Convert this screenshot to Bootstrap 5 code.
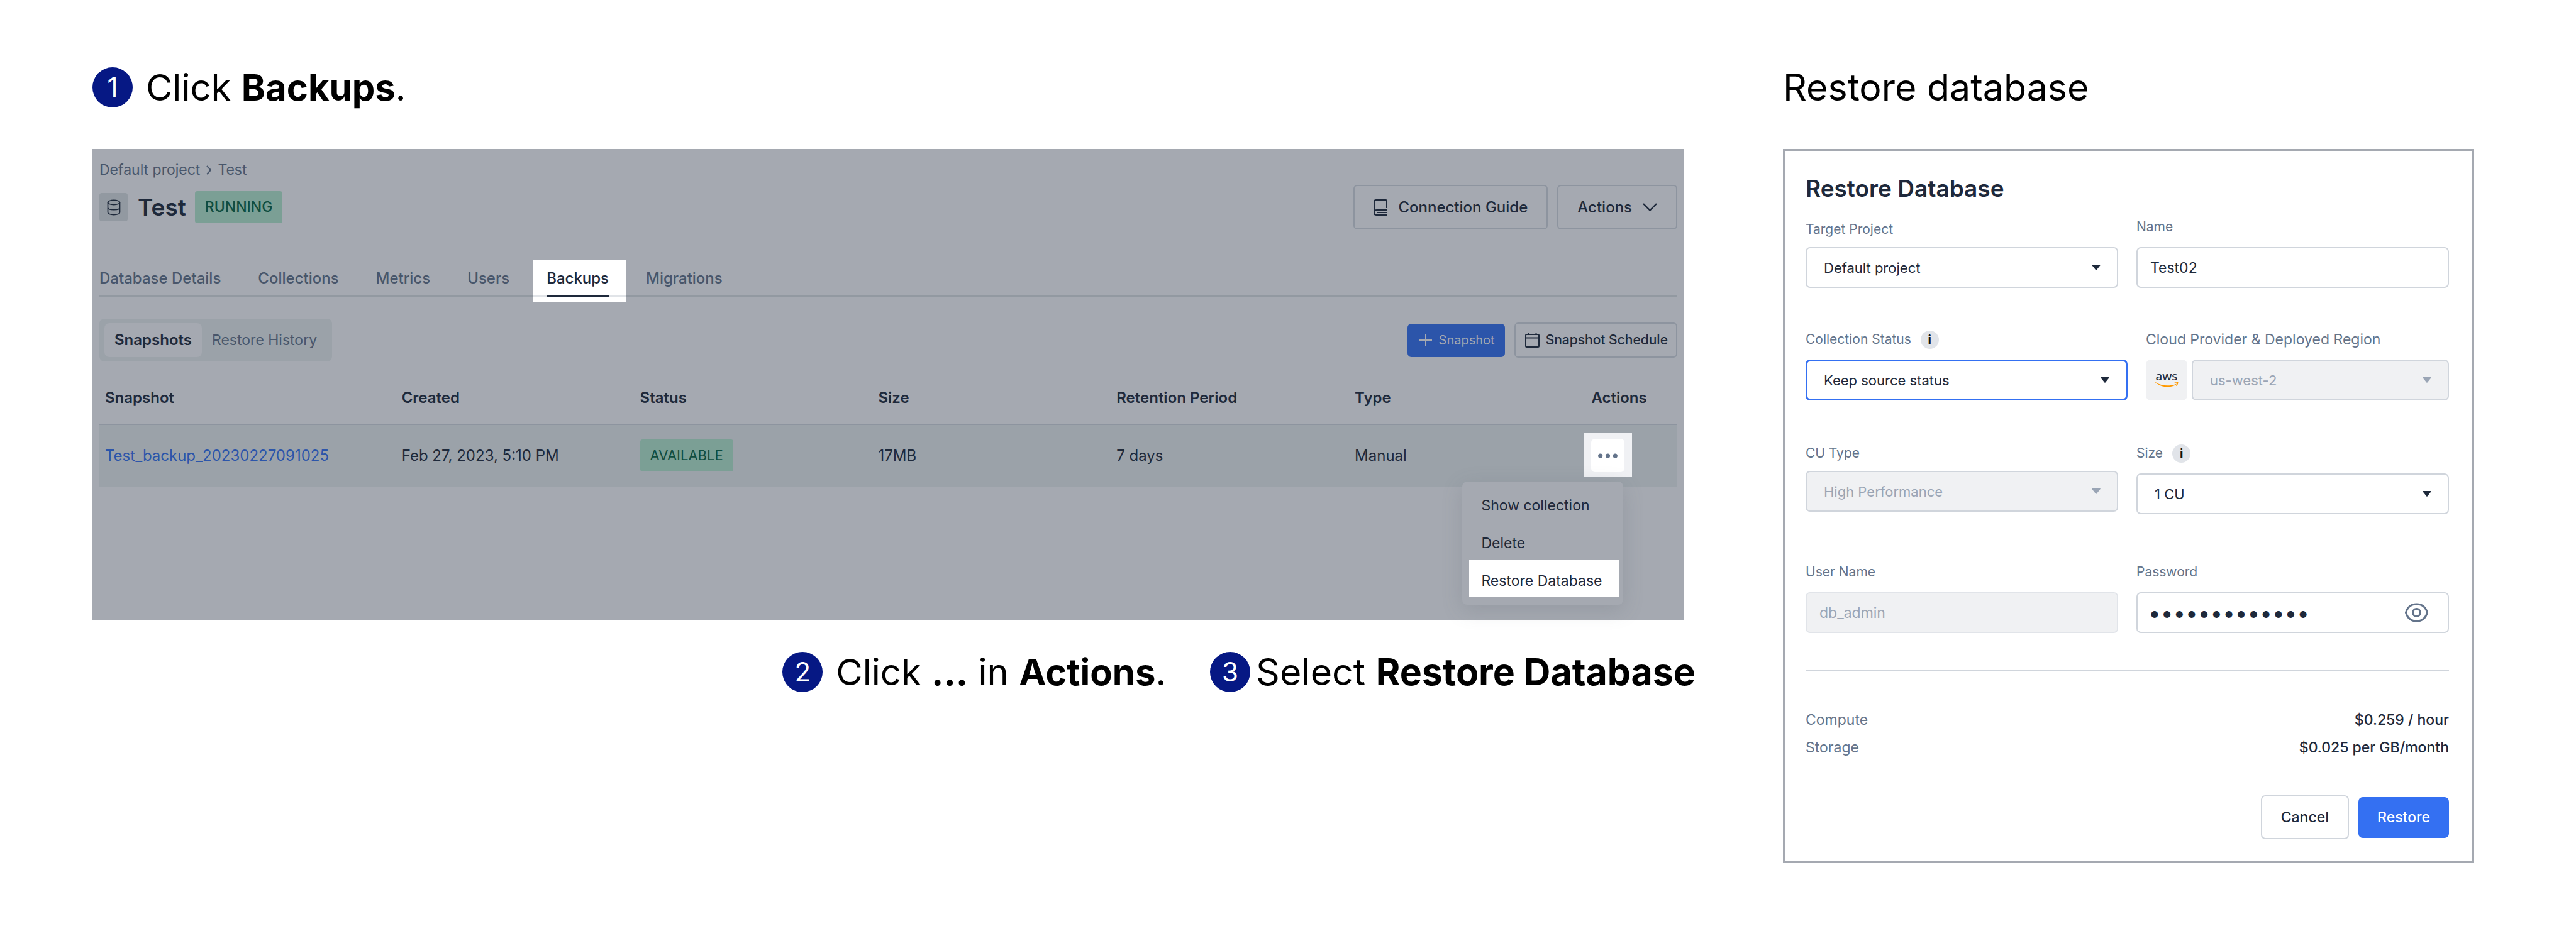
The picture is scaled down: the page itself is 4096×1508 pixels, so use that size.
<!DOCTYPE html>
<html lang="en">
<head>
<meta charset="utf-8">
<meta name="viewport" content="width=device-width, initial-scale=1">
<title>Restore a database from a backup</title>
<link href="https://cdn.jsdelivr.net/npm/bootstrap@5.3.0/dist/css/bootstrap.min.css" rel="stylesheet">
<style>
  :root { --ink: #1e293b; --dim: #a5a9b1; --dim-row: #9ba2a9; --dim-line: #8d949f; --dim-muted: #48566b; --muted: #64748b; --line: #d0d5dc; --blue: #3470f2; }
  body { font-family: Inter, "Liberation Sans", sans-serif; font-size: 24px; line-height: 32px; color: var(--ink); background: #fff; }
  button { font-family: inherit; }
  .guide { padding: 107px 162px 136px 147px; gap: 157px; }
  .guide-left { flex: 2531 1 0; min-width: 0; }
  .guide-right { flex: 1099 1 0; min-width: 0; }

  /* step captions */
  .caption { font-size: 59px; line-height: 64px; font-weight: 400; color: #000; margin: 0; gap: 21px; white-space: nowrap; }
  .caption b { font-weight: 700; }
  .caption-near { gap: 9px; }
  .caption-mid { font-size: 58px; }
  .step-no { width: 64px; height: 64px; border-radius: 50%; background: #061884; color: #fff; font-size: 42px; }
  .caption-top { margin-bottom: 66px; }
  .caption-row { margin: 51px -18px 0 0; gap: 70px; }

  /* dimmed console */
  .console { background: var(--dim); padding: 17px 11px 211px 11px; }
  .crumbs { color: var(--dim-muted); font-size: 23px; gap: 10px; }
  .crumbs a { color: inherit; text-decoration: none; }
  .db-head { margin-top: 8px; min-height: 71px; }
  .tool-gap { gap: 15px; }
  .db-icon { width: 45px; height: 45px; border-radius: 4px; background: #9299a1; }
  .db-name { font-size: 37px; line-height: 48px; font-weight: 600; margin: 0 14px 0 16px; }
  .state { background: #7b9f95; color: #0f4d40; font-size: 22px; line-height: 32px; border-radius: 4px; padding: 9px 16px 10px; font-weight: 400; }
  .state-strong { font-weight: 500; font-size: 23px; }
  .btn-line { border: 2px solid var(--dim-line); border-radius: 6px; color: var(--ink); font-size: 24px; line-height: 32px; font-weight: 500; height: 71px; padding: 0 30px; gap: 17px; }
  .btn-slim { font-size: 21px; height: 56px; padding: 0 13px 0 15px; gap: 10px; }
  .btn-snap { background: #2c55aa; color: var(--dim); border-radius: 6px; font-size: 20px; line-height: 32px; height: 53px; padding: 0 16px 0 19px; gap: 11px; }

  .db-tabs { margin-top: 62px; border-bottom: 4px solid #9299a1; gap: 59px; }
  .db-tabs .nav-link { padding: 0 0 10px; color: var(--dim-muted); font-weight: 500; position: relative; z-index: 0; }
  .db-tabs .active { color: var(--ink); }
  .db-tabs .active::before { content: ""; position: absolute; z-index: -1; inset: -14px -27px -11px -21px; background: linear-gradient(#e1e4e8, #e1e4e8) 0 56px / 100% 4px no-repeat #fff; }
  .db-tabs .active::after { content: ""; position: absolute; left: 0; right: 0; bottom: -4px; height: 4px; background: var(--ink); }

  .db-tools { margin: 34px 0 16px; }
  .seg { background: var(--dim-row); border-radius: 8px; padding: 7px 8px; }
  .seg .btn { font-size: 23px; line-height: 32px; height: 54px; padding: 0 16px; border: 0; border-radius: 8px; color: var(--dim-muted); }
  .seg .on { background: var(--dim); color: var(--ink); font-weight: 600; font-size: 24px; }

  .snap-table { --bs-table-bg: transparent; margin: 0; table-layout: fixed; color: var(--ink); }
  .snap-table th { font-weight: 600; height: 84px; padding: 0 9px; border-bottom: 2px solid var(--dim-line); vertical-align: middle; color: var(--ink); }
  .snap-table td { height: 99px; padding: 0 9px; border-bottom: 1px solid var(--dim-line); background: var(--dim-row); vertical-align: middle; color: var(--ink); }
  .snap-table a { color: #2c55aa; text-decoration: none; }
  .snap-table .state { display: inline-block; }
  .spot { position: relative; display: inline-block; background: #f0f1f4; padding: 9px 12px 7px; margin: -9px -12px -7px; vertical-align: middle; }
  .dots { display: block; width: 53px; height: 53px; border: 0; border-radius: 6px; background: #fff; padding: 0; line-height: 0; }
  .spot .dropdown-menu { top: 77px; right: 14px; width: 256px; padding: 8px 0; border: 0; border-radius: 8px; background: var(--dim); box-shadow: 0 8px 32px rgba(90, 98, 110, .22); }
  .spot .dropdown-item { position: relative; z-index: 0; height: 60px; padding: 14px 0 14px 30px; font-size: 23px; line-height: 32px; color: var(--ink); background: none; }
  .spot .lit::before { content: ""; position: absolute; z-index: -1; inset: -3px 7px 4px 11px; background: #fff; }

  /* restore form */
  .sheet { border: 3px solid #a5a9b1; padding: 36px 37px 34px 33px; background: #fff; }
  .sheet h2 { font-size: 37px; line-height: 48px; font-weight: 600; margin: 0 0 21px; }
  .pair { gap: 29px; }
  .pair > div { flex: 1 1 0; min-width: 0; }
  .pair > .wider { flex: 512 1 0; }
  .pair > .narrower { flex: 482 1 0; }
  .pair label { color: var(--muted); font-size: 21px; line-height: 32px; display: block; }
  .pair .label-lg { font-size: 23px; }
  .label-line { margin-bottom: 16px; gap: 15px; }
  .tight .label-line { margin-bottom: 12px; }
  .row-b { margin-top: 66px; }
  .row-c { margin-top: 68px; }
  .row-d { margin-top: 76px; }
  .info { width: 29px; height: 29px; border-radius: 50%; background: #e1e4e9; color: #111; font-size: 20px; line-height: 29px; font-weight: 700; text-align: center; }
  .region-line { gap: 7px; }
  .sheet .form-control, .sheet .form-select { height: 65px; border: 2px solid var(--line); border-radius: 7px; font-size: 23px; line-height: 32px; color: var(--ink); padding: 0 20px; background-color: #fff; }
  .sheet .form-select { font-size: 22px; padding: 0 60px 0 27px; background-size: 14px 9px; background-position: right 26px center;
    --bs-form-select-bg-img: url("data:image/svg+xml,%3csvg xmlns='http://www.w3.org/2000/svg' viewBox='0 0 14 9'%3e%3cpath fill='%231e293b' d='M.6 0h12.8q.8.3.2 1L7.6 8.600q-.6.6-1.200 0L.4 1q-.6-.7.2-1z'/%3e%3c/svg%3e"); }
  .sheet .form-select:disabled { color: #9aa5b5; background-color: #f0f1f3; opacity: 1;
    --bs-form-select-bg-img: url("data:image/svg+xml,%3csvg xmlns='http://www.w3.org/2000/svg' viewBox='0 0 14 9'%3e%3cpath fill='%239aa5b5' d='M.6 0h12.8q.8.3.2 1L7.6 8.600q-.6.6-1.200 0L.4 1q-.6-.7.2-1z'/%3e%3c/svg%3e"); }
  .sheet .form-control:disabled { color: #9aa5b5; background-color: #f0f1f3; border-color: #e1e4e9; }
  .sheet .picked { border: 3px solid var(--blue); padding-left: 26px; }
  .aws { width: 66px; height: 65px; border-radius: 8px; background: #f0f1f3; flex: none; }
  .pwd { height: 65px; border: 2px solid var(--line); border-radius: 7px; padding: 0 31px 0 0; }
  .sheet .pwd .form-control { border: 0; height: 61px; padding: 0 17px; font-size: 35px; background: none; }
  .eye { border: 0; background: none; padding: 0; line-height: 0; }
  .rule { border: 0; border-top: 2px solid var(--line); opacity: 1; margin: 59px 0 55px; }
  .costs { line-height: 44px; margin: 0; font-size: 23px; }
  .costs dt { font-weight: 400; color: var(--muted); }
  .costs dd { font-weight: 500; margin: 0; }
  .sheet-end { margin-top: 54px; gap: 15px; }
  .btn-form { font-size: 23px; line-height: 32px; font-weight: 500; border-radius: 7px; padding: 0 30px; }
  .btn-cancel { height: 70px; border: 2px solid var(--line); color: var(--ink); background: #fff; }
  .btn-restore { height: 65px; border: 0; color: #fff; background: var(--blue); }
</style>
</head>
<body>
<main class="guide d-flex align-items-start">
  <section class="guide-left">
    <p class="caption caption-mid caption-top d-flex align-items-center"><span class="step-no text-center">1</span><span>Click <b>Backups</b>.</span></p>

    <div class="console">
      <nav class="crumbs d-flex align-items-center" aria-label="breadcrumb">
        <a href="#">Default project</a>
        <svg width="8" height="15" viewBox="0 0 8 15" fill="none" stroke="#48566b" stroke-width="2"><path d="M1 1l6 6.500-6 6.500"/></svg>
        <a href="#">Test</a>
      </nav>

      <div class="db-head d-flex align-items-center">
        <span class="db-icon d-flex align-items-center justify-content-center">
          <svg width="22" height="26" viewBox="0 0 22 26" fill="none" stroke="#1e293b" stroke-width="1.700"><ellipse cx="11" cy="5" rx="9.500" ry="3.600"/><path d="M1.500 5v16c0 2 4 3.600 9.500 3.600s9.500-1.600 9.500-3.600V5M1.500 13.300c0 2 4 3.400 9.500 3.400s9.500-1.400 9.500-3.400"/></svg>
        </span>
        <h1 class="db-name">Test</h1>
        <span class="state state-strong">RUNNING</span>
        <div class="tool-gap d-flex ms-auto">
          <button type="button" class="btn btn-line d-flex align-items-center">
            <svg width="22" height="26" viewBox="0 0 22 26" fill="none" stroke="#1e293b" stroke-width="2"><path d="M21 14V2.500Q21 1 19.500 1H4Q1 1 1 4V21.500Q1 25 4.500 25H21M1 20.500Q1.500 17 5 17H21M5 21H21"/></svg>
            Connection Guide
          </button>
          <button type="button" class="btn btn-line d-flex align-items-center">
            Actions
            <svg width="23" height="13" viewBox="0 0 23 13" fill="none" stroke="#1e293b" stroke-width="2.400"><path d="M1 1l10.500 10.500L22 1"/></svg>
          </button>
        </div>
      </div>

      <ul class="db-tabs nav">
        <li class="nav-item"><a class="nav-link" href="#">Database Details</a></li>
        <li class="nav-item"><a class="nav-link" href="#">Collections</a></li>
        <li class="nav-item"><a class="nav-link" href="#">Metrics</a></li>
        <li class="nav-item"><a class="nav-link" href="#">Users</a></li>
        <li class="nav-item"><a class="nav-link active" aria-current="page" href="#">Backups</a></li>
        <li class="nav-item"><a class="nav-link" href="#">Migrations</a></li>
      </ul>

      <div class="db-tools d-flex align-items-center">
        <div class="seg d-flex">
          <button type="button" class="btn on">Snapshots</button>
          <button type="button" class="btn">Restore History</button>
        </div>
        <div class="tool-gap d-flex align-items-center ms-auto">
          <button type="button" class="btn btn-snap border-0 d-flex align-items-center">
            <svg width="20" height="20" viewBox="0 0 20 20" fill="none" stroke="#a5a9b1" stroke-width="2"><path d="M10 0v20M0 10h20"/></svg>
            Snapshot
          </button>
          <button type="button" class="btn btn-line btn-slim d-flex align-items-center">
            <svg width="23" height="24" viewBox="0 0 23 24" fill="none" stroke="#1e293b" stroke-width="2"><rect x="1" y="3" width="21" height="20" rx="1.500"/><path d="M1 8.500h21M5.500 0v4M17.500 0v4"/></svg>
            Snapshot Schedule
          </button>
        </div>
      </div>

      <table class="table snap-table">
        <colgroup>
          <col style="width:18.8%"><col style="width:15.1%"><col style="width:15.1%"><col style="width:15.1%"><col style="width:15.1%"><col style="width:15%"><col>
        </colgroup>
        <thead>
          <tr><th>Snapshot</th><th>Created</th><th>Status</th><th>Size</th><th>Retention Period</th><th>Type</th><th>Actions</th></tr>
        </thead>
        <tbody>
          <tr>
            <td><a href="#">Test_backup_20230227091025</a></td>
            <td>Feb 27, 2023, 5:10 PM</td>
            <td><span class="state">AVAILABLE</span></td>
            <td>17MB</td>
            <td>7 days</td>
            <td>Manual</td>
            <td>
              <div class="spot">
                <button type="button" class="dots" aria-label="Actions">
                  <svg width="31" height="8" viewBox="0 0 31 8" fill="#64748b"><circle cx="3.700" cy="4" r="3.600"/><circle cx="15.500" cy="4" r="3.600"/><circle cx="27.300" cy="4" r="3.600"/></svg>
                </button>
                <div class="dropdown-menu show">
                  <a class="dropdown-item" href="#">Show collection</a>
                  <a class="dropdown-item" href="#">Delete</a>
                  <a class="dropdown-item lit" href="#">Restore Database</a>
                </div>
              </div>
            </td>
          </tr>
        </tbody>
      </table>
    </div>

    <div class="caption-row d-flex justify-content-end">
      <p class="caption caption-mid d-flex align-items-center"><span class="step-no text-center">2</span><span>Click <b>...</b> in <b>Actions</b>.</span></p>
      <p class="caption caption-near d-flex align-items-center"><span class="step-no text-center">3</span><span>Select <b>Restore Database</b></span></p>
    </div>
  </section>

  <section class="guide-right">
    <p class="caption caption-top">Restore database</p>

    <form class="sheet">
      <h2>Restore Database</h2>

      <div class="pair d-flex align-items-end">
        <div class="tight">
          <div class="label-line d-flex"><label for="project">Target Project</label></div>
          <select id="project" class="form-select"><option>Default project</option></select>
        </div>
        <div>
          <div class="label-line d-flex"><label for="name">Name</label></div>
          <input id="name" type="text" class="form-control" value="Test02">
        </div>
      </div>

      <div class="pair row-b d-flex align-items-end">
        <div class="wider">
          <div class="label-line d-flex align-items-center"><label for="status">Collection Status</label><span class="info">i</span></div>
          <select id="status" class="form-select picked"><option>Keep source status</option></select>
        </div>
        <div class="narrower">
          <div class="label-line d-flex"><label class="label-lg" for="region">Cloud Provider &amp; Deployed Region</label></div>
          <div class="region-line d-flex">
            <span class="aws">
              <svg width="66" height="65" viewBox="0 0 222 222" role="img" aria-label="aws"><text x="51" y="112" font-family="Noto Sans, sans-serif" font-weight="500" font-size="64" fill="#252f3e">aws</text><path d="M51 123C86 146 131 145 163 132q4-1 1 3C134 154 86 155 50 125q-1-3 1-2z" fill="#ff9900"/><path d="M153 126C162 119 173 120 174 123C175 128 171 138 165 143q-3 1-2-2c3-6 5-12 4-14-2-2-8-1-13 0q-3 0-1-1z" fill="#ff9900"/></svg>
            </span>
            <select id="region" class="form-select" disabled><option>us-west-2</option></select>
          </div>
        </div>
      </div>

      <div class="pair row-c d-flex align-items-start">
        <div class="tight">
          <div class="label-line d-flex"><label for="cutype">CU Type</label></div>
          <select id="cutype" class="form-select" disabled><option>High Performance</option></select>
        </div>
        <div>
          <div class="label-line d-flex align-items-center"><label for="size">Size</label><span class="info">i</span></div>
          <select id="size" class="form-select"><option>1 CU</option></select>
        </div>
      </div>

      <div class="pair row-d d-flex align-items-start">
        <div>
          <div class="label-line d-flex"><label for="user">User Name</label></div>
          <input id="user" type="text" class="form-control" value="db_admin" disabled>
        </div>
        <div>
          <div class="label-line d-flex"><label for="password">Password</label></div>
          <div class="pwd d-flex align-items-center">
            <input id="password" type="password" class="form-control" value="1234567890123">
            <button type="button" class="eye" aria-label="Show password">
              <svg width="37" height="31" viewBox="0 0 37 31" fill="none" stroke="#64748b" stroke-width="3"><path d="M1.500 15.500C4 7 10 2 18.500 2S33 7 35.500 15.500C33 24 27 29 18.500 29S4 24 1.500 15.500z"/><circle cx="18.500" cy="15.500" r="6"/></svg>
            </button>
          </div>
        </div>
      </div>

      <hr class="rule">

      <dl class="costs">
        <div class="d-flex justify-content-between"><dt>Compute</dt><dd>$0.259 / hour</dd></div>
        <div class="d-flex justify-content-between"><dt>Storage</dt><dd>$0.025 per GB/month</dd></div>
      </dl>

      <div class="sheet-end d-flex align-items-center justify-content-end">
        <button type="button" class="btn btn-form btn-cancel">Cancel</button>
        <button type="submit" class="btn btn-form btn-restore">Restore</button>
      </div>
    </form>
  </section>
</main>
<script src="https://cdn.jsdelivr.net/npm/bootstrap@5.3.0/dist/js/bootstrap.bundle.min.js"></script>
</body>
</html>
